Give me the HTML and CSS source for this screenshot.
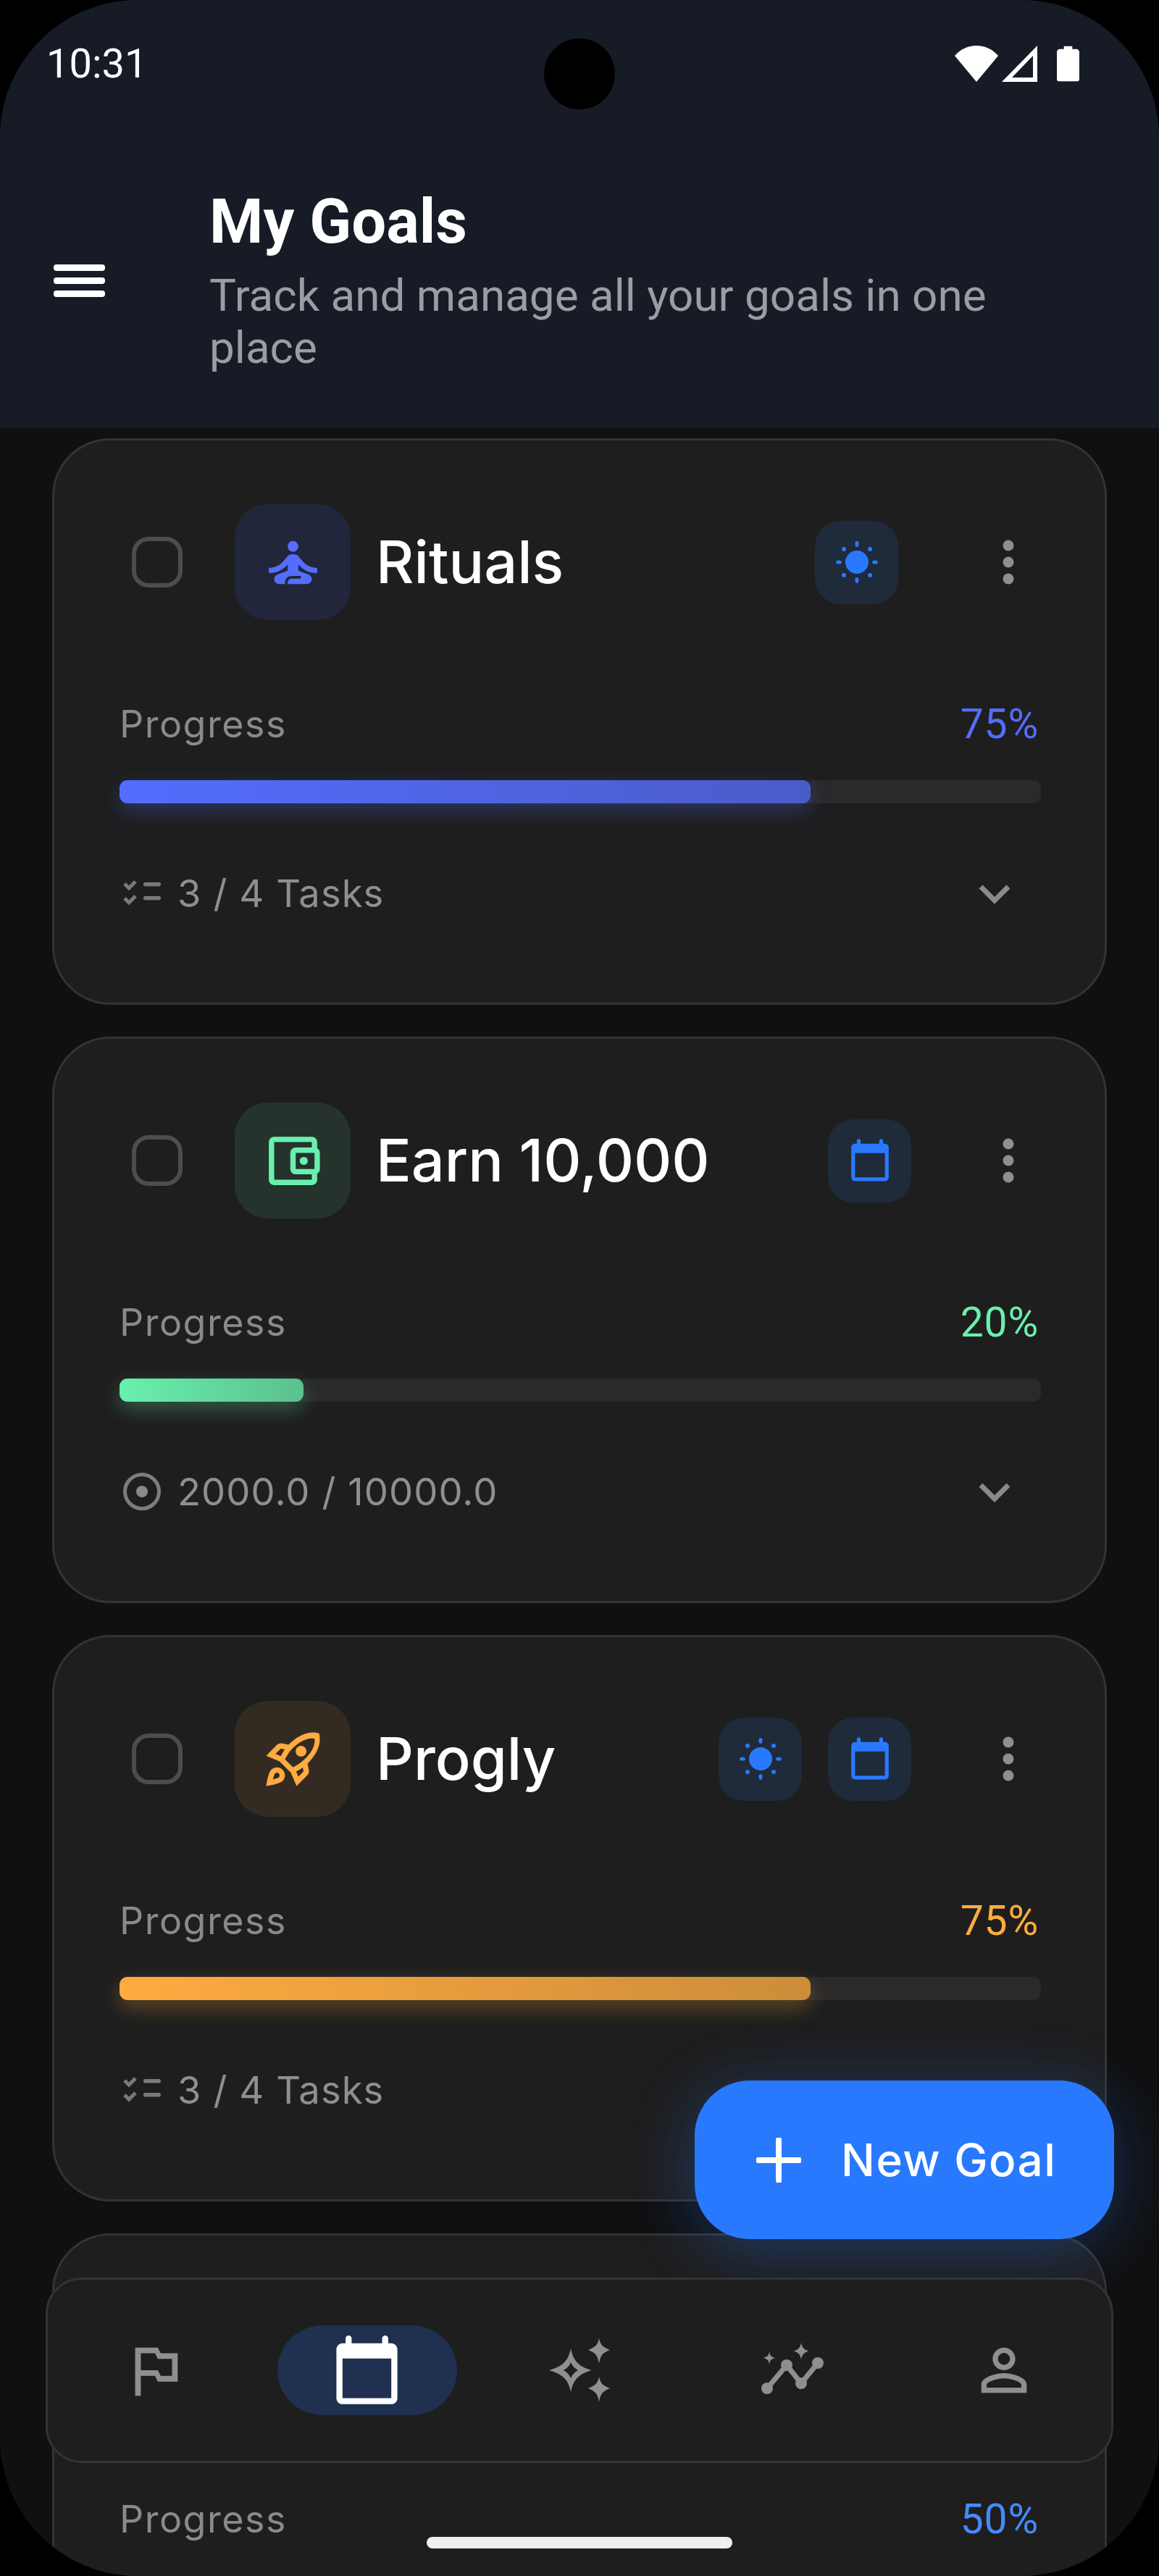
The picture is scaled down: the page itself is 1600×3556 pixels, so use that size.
FILE: index.html
```html
<!DOCTYPE html>
<html lang="en">
<head>
<meta charset="utf-8">
<title>My Goals</title>
<link rel="stylesheet" href="styles.css">
</head>
<body>
<svg class="defs" width="0" height="0" aria-hidden="true">
  <symbol id="sun" viewBox="-32 -32 64 64">
    <circle r="16"/>
    <ellipse cy="-25" rx="2.6" ry="4"/><ellipse cy="25" rx="2.6" ry="4"/>
    <ellipse cx="-25" rx="4" ry="2.6"/><ellipse cx="25" rx="4" ry="2.6"/>
    <circle cx="-18" cy="-18" r="3"/><circle cx="18" cy="-18" r="3"/>
    <circle cx="-18" cy="18" r="3"/><circle cx="18" cy="18" r="3"/>
  </symbol>
  <symbol id="cal" viewBox="0 0 24 24">
    <path d="M20 3h-1V1.5a.75.75 0 0 0-2 0V3H7V1.5a.75.75 0 0 0-2 0V3H4c-1.1 0-2 .9-2 2v16c0 1.1.9 2 2 2h16c1.1 0 2-.9 2-2V5c0-1.1-.9-2-2-2zm0 18H4V8h16v13z"/>
  </symbol>
  <symbol id="kebab" viewBox="0 0 20 64">
    <circle cx="10" cy="9" r="7.5"/><circle cx="10" cy="32" r="7.5"/><circle cx="10" cy="55" r="7.5"/>
  </symbol>
  <symbol id="chev" viewBox="0 0 64 64">
    <path d="M13 21l19 19 19-19" fill="none" stroke="currentColor" stroke-width="7"/>
  </symbol>
  <symbol id="tasks" viewBox="0 0 52 40">
    <path d="M2 7l6 6 9-9M2 27l6 6 9-9" fill="none" stroke="#7a7a7a" stroke-width="5"/>
    <rect x="28" y="5" width="24" height="5.5" rx="2.7" fill="#7a7a7a"/>
    <rect x="28" y="24" width="24" height="5.5" rx="2.7" fill="#7a7a7a"/>
  </symbol>
  <symbol id="target" viewBox="0 0 56 56">
    <circle cx="28" cy="28" r="23.5" fill="none" stroke="#7d7d7d" stroke-width="5"/>
    <circle cx="28" cy="28" r="8" fill="#8a8a8a"/>
  </symbol>
</svg>

<div class="phone">
  <header class="topbar">
    <div class="status">
      <span class="time">10:31</span>
      <div class="status-icons">
        <svg class="ic-wifi" viewBox="0 0 60 50"><path d="M0 14C8 5 18 0 30 0s22 5 30 14L30 50z"/></svg>
        <svg class="ic-signal" viewBox="0 0 50 50"><path fill-rule="evenodd" d="M49 0v50H0zM43 14L14 44h29z"/></svg>
        <svg class="ic-batt" viewBox="0 0 32 50"><path d="M10 0h12v4h6c2 0 4 2 4 4v39c0 2-1 3-3 3H3c-2 0-3-1-3-3V8c0-2 2-4 4-4h6z"/></svg>
      </div>
    </div>
    <div class="camera"></div>
    <div class="appbar">
      <div class="menu"><i></i><i></i><i></i></div>
      <div class="appbar-text">
        <h1>My Goals</h1>
        <p>Track and manage all your goals in one place</p>
      </div>
    </div>
  </header>

  <main class="list">
    <article class="card">
      <div class="row-head">
        <span class="check"></span>
        <span class="badge badge-indigo">
          <svg class="badge-ic" viewBox="0 0 24 24"><circle cx="12" cy="6" r="2"/><path d="M21 16v-2c-2.24 0-4.16-.96-5.6-2.68l-1.34-1.6c-.38-.46-.94-.72-1.53-.72h-1.05c-.59 0-1.15.26-1.53.72l-1.34 1.6C7.16 13.04 5.24 14 3 14v2c2.77 0 5.19-1.17 7-3.25V15l-3.88 1.55c-.67.27-1.12.93-1.12 1.64C5 19.19 5.81 20 6.81 20H9v-.5c0-1.38 1.12-2.5 2.5-2.5h3c.28 0 .5.22.5.5s-.22.5-.5.5h-3c-.83 0-1.5.67-1.5 1.5v.5h7.19c1 0 1.81-.81 1.81-1.81 0-.71-.45-1.37-1.12-1.64L14 15v-2.25c1.81 2.08 4.23 3.25 7 3.25z"/></svg>
        </span>
        <h2>Rituals</h2>
        <div class="chips chips-shift">
          <span class="chip"><svg class="chip-sun"><use href="#sun"/></svg></span>
        </div>
        <span class="kebab"><svg><use href="#kebab"/></svg></span>
      </div>
      <div class="row-label"><span>Progress</span><b class="pct-indigo">75%</b></div>
      <div class="track"><div class="fill fill-indigo" style="width:75%"></div></div>
      <div class="row-foot">
        <svg class="foot-tasks"><use href="#tasks"/></svg>
        <span class="foot-text">3 / 4 Tasks</span>
        <svg class="chev"><use href="#chev"/></svg>
      </div>
    </article>

    <article class="card">
      <div class="row-head">
        <span class="check"></span>
        <span class="badge badge-green">
          <svg class="badge-ic" viewBox="0 0 24 24"><path d="M21 7.28V5c0-1.1-.9-2-2-2H5c-1.11 0-2 .9-2 2v14c0 1.1.89 2 2 2h14c1.1 0 2-.9 2-2v-2.28c.59-.35 1-.98 1-1.72V9c0-.74-.41-1.37-1-1.72zM20 9v6h-7V9h7zM5 19V5h14v2h-6c-1.1 0-2 .9-2 2v6c0 1.1.9 2 2 2h6v2H5z"/><circle cx="16" cy="12" r="1.5"/></svg>
        </span>
        <h2>Earn 10,000</h2>
        <div class="chips">
          <span class="chip"><svg class="chip-cal"><use href="#cal"/></svg></span>
        </div>
        <span class="kebab"><svg><use href="#kebab"/></svg></span>
      </div>
      <div class="row-label"><span>Progress</span><b class="pct-green">20%</b></div>
      <div class="track"><div class="fill fill-green" style="width:20%"></div></div>
      <div class="row-foot">
        <svg class="foot-target"><use href="#target"/></svg>
        <span class="foot-text">2000.0 / 10000.0</span>
        <svg class="chev"><use href="#chev"/></svg>
      </div>
    </article>

    <article class="card">
      <div class="row-head">
        <span class="check"></span>
        <span class="badge badge-orange">
          <svg class="badge-ic" viewBox="0 0 24 24"><path d="M6 15c-.83 0-1.58.34-2.12.88C2.68 17.08 2 22 2 22s4.92-.68 6.12-1.88c.54-.54.88-1.29.88-2.12 0-1.66-1.34-3-3-3zm.71 3.71c-.28.28-2.17.76-2.17.76s.47-1.88.76-2.17c.17-.19.42-.3.7-.3.55 0 1 .45 1 1 0 .28-.11.53-.29.71zm10.71-5.06c6.36-6.36 4.24-11.31 4.24-11.31S16.71.22 10.35 6.58l-2.49-.5c-.65-.13-1.33.08-1.81.55L2 10.69l5 2.14L11.17 17l2.14 5 4.05-4.05c.47-.47.68-1.15.55-1.81l-.49-2.49zM7.41 10.83l-1.91-.82 1.97-1.97 1.44.29c-.57.83-1.08 1.7-1.5 2.5zm6.58 7.67l-.82-1.91c.8-.42 1.67-.93 2.49-1.5l.29 1.44-1.96 1.97zM16 12.24c-1.32 1.32-3.38 2.4-4.04 2.73l-2.93-2.93c.32-.65 1.4-2.71 2.73-4.04 4.68-4.68 8.23-3.69 8.23-3.69s.99 3.55-3.99 7.93zM15 11c1.1 0 2-.9 2-2s-.9-2-2-2-2 .9-2 2 .9 2 2 2z"/></svg>
        </span>
        <h2>Progly</h2>
        <div class="chips">
          <span class="chip"><svg class="chip-sun"><use href="#sun"/></svg></span>
          <span class="chip"><svg class="chip-cal"><use href="#cal"/></svg></span>
        </div>
        <span class="kebab"><svg><use href="#kebab"/></svg></span>
      </div>
      <div class="row-label"><span>Progress</span><b class="pct-orange">75%</b></div>
      <div class="track"><div class="fill fill-orange" style="width:75%"></div></div>
      <div class="row-foot">
        <svg class="foot-tasks"><use href="#tasks"/></svg>
        <span class="foot-text">3 / 4 Tasks</span>
        <svg class="chev"><use href="#chev"/></svg>
      </div>
    </article>

    <article class="card">
      <div class="row-head"></div>
      <div class="row-label"><span>Progress</span><b class="pct-blue">50%</b></div>
    </article>
  </main>

  <button class="fab">
    <svg class="fab-plus" viewBox="0 0 62 62"><path d="M31 3v56M3 31h56" fill="none" stroke="#fff" stroke-width="8" stroke-linecap="round"/></svg>
    <span>New Goal</span>
  </button>

  <nav class="nav">
    <div class="nav-item">
      <svg class="nav-ic" viewBox="0 0 24 24"><path d="M14 6l-1-2H5v17h2v-7h5l1 2h7V6h-6zm4 8h-4l-1-2H7V6h5l1 2h5v6z"/></svg>
    </div>
    <div class="nav-item nav-active">
      <span class="pill"><svg class="nav-cal"><use href="#cal"/></svg></span>
    </div>
    <div class="nav-item">
      <svg class="nav-ic" viewBox="0 0 94 94"><path fill-rule="evenodd" d="M35 17c3 14 8 24 28.500 30C43 53 38 63 35 77 32 63 27 53 5 47c22-6 27-16 30-30zm0 19c-2 5-5 8-10 11 5 3 8 6 10 11 2-5 5-8 10-11-5-3-8-6-10-11z"/><path d="M74 3c2 9 5 12 15 16-10 4-13 7-15 19-2-12-5-15-15-19 10-4 13-7 15-16zM74 56c2 9 5 12 15 16-10 4-13 7-15 19-2-12-5-15-15-19 10-4 13-7 15-16z"/></svg>
    </div>
    <div class="nav-item">
      <svg class="nav-ic" viewBox="-3 0 94 94"><path d="M10 72l27-32 20 25 23-28" fill="none" stroke="currentColor" stroke-width="7" stroke-linejoin="round"/><circle cx="10" cy="72" r="8"/><circle cx="37" cy="40" r="8"/><circle cx="57" cy="65" r="8"/><circle cx="80" cy="37" r="8"/><path d="M57 9c1.500 7 3.500 9 10 11.500C60.500 23 58.500 25 57 32c-1.500-7-3.500-9-10-11.500C53.500 18 55.500 16 57 9zM13 21c1 6 2 7 8 9-6 2-7 3-8 9-1-6-2-7-8-9 6-2 7-3 8-9z"/></svg>
    </div>
    <div class="nav-item">
      <svg class="nav-ic" viewBox="0 0 24 24"><path d="M12 5.900c1.160 0 2.100.94 2.100 2.100s-.94 2.100-2.100 2.100S9.900 9.160 9.900 8s.94-2.100 2.100-2.100m0 9c2.970 0 6.100 1.460 6.100 2.100v1.100H5.900V17c0-.64 3.130-2.100 6.100-2.100M12 4C9.790 4 8 5.790 8 8s1.790 4 4 4 4-1.790 4-4-1.790-4-4-4zm0 9c-2.670 0-8 1.340-8 4v3h16v-3c0-2.660-5.330-4-8-4z"/></svg>
    </div>
  </nav>

  <div class="home-bar"></div>
</div>
</body>
</html>
```

FILE: styles.css
```css
* { box-sizing: border-box; }
html, body { margin: 0; padding: 0; background: #000; }
.defs { position: absolute; }

.phone {
  position: relative;
  width: 1600px;
  height: 3556px;
  overflow: hidden;
  border-radius: 190px;
  background: #101010;
  font-family: "Inter", "Liberation Sans", sans-serif;
}

/* Header */
.topbar {
  position: relative;
  height: 591px;
  background: #161b26;
  font-family: "Roboto", "Liberation Sans", sans-serif;
}
.status {
  display: flex;
  justify-content: space-between;
  align-items: flex-start;
  height: 140px;
  padding: 56px 110px 0 64px;
}
.time { font-size: 56px; line-height: 64px; color: #fff; }
.status-icons { display: flex; gap: 5px; padding-top: 7px; }
.status-icons svg { fill: #fff; display: block; height: 50px; }
.ic-wifi { width: 60px; }
.ic-signal { width: 50px; }
.ic-batt { width: 31px; margin-left: 21px; }
.camera {
  position: absolute;
  left: 751px;
  top: 53px;
  width: 98px;
  height: 98px;
  border-radius: 50%;
  background: #000;
}
.appbar {
  display: flex;
  align-items: flex-start;
  padding: 122px 110px 0 74px;
}
.menu {
  display: flex;
  flex-direction: column;
  gap: 9px;
  width: 71px;
  margin: 103px 144px 0 0;
  flex: none;
}
.menu i { display: block; height: 9px; border-radius: 4px; background: #fff; }
.appbar-text { flex: 1; min-width: 0; }
.appbar-text h1 {
  margin: 0 0 22px;
  font-size: 85px;
  line-height: 88px;
  font-weight: 700;
  color: #fff;
}
.appbar-text p {
  margin: 0;
  font-size: 62px;
  line-height: 72px;
  color: #9b9da3;
}

/* List */
.list {
  display: flex;
  flex-direction: column;
  gap: 44px;
  padding: 14px 72px 0;
}
.card {
  flex: none;
  height: 782px;
  padding: 88px 88px 0 90px;
  background: #1e1e1e;
  border: 3px solid #333;
  border-radius: 80px;
}
.row-head { display: flex; align-items: center; height: 160px; }
.check {
  flex: none;
  width: 70px;
  height: 70px;
  margin: 0 72px 0 17px;
  border: 6px solid #4d4d4d;
  border-radius: 23px;
}
.badge {
  flex: none;
  display: flex;
  align-items: center;
  justify-content: center;
  width: 160px;
  height: 160px;
  border-radius: 46px;
}
.badge-ic { width: 89px; height: 89px; display: block; }
.badge-indigo { background: #22263a; fill: #536dfe; }
.badge-green { background: #26332d; fill: #69f0ae; }
.badge-orange { background: #332b22; fill: #ffab40; }
.row-head h2 {
  flex: 1;
  min-width: 0;
  margin: 0 0 0 35px;
  font-size: 81px;
  line-height: 96px;
  font-weight: 500;
  color: #fff;
}
.chips { display: flex; gap: 36px; margin-right: 89px; flex: none; }
.chips-shift { margin-right: 107px; }
.chip {
  display: flex;
  align-items: center;
  justify-content: center;
  width: 115px;
  height: 115px;
  border-radius: 35px;
  background: #1f2a3a;
  fill: #2979ff;
}
.chip-sun { width: 64px; height: 64px; display: block; }
.chip-cal { width: 62px; height: 62px; display: block; }
.kebab { flex: none; width: 90px; display: flex; justify-content: center; fill: #8f8f8f; }
.kebab svg { width: 20px; height: 64px; display: block; }

.row-label {
  display: flex;
  justify-content: space-between;
  align-items: center;
  height: 72px;
  margin-top: 107px;
  font-size: 52px;
  color: #8a8a8a;
  letter-spacing: 1.500px;
}
.row-label b {
  font-family: "Roboto", "Liberation Sans", sans-serif;
  font-size: 57px;
  font-weight: 400;
  letter-spacing: .8px;
  padding-right: 3px;
}
.pct-indigo { color: #536dfe; }
.pct-green { color: #69f0ae; }
.pct-orange { color: #ffab40; }
.pct-blue { color: #448aff; }

.track { height: 32px; margin-top: 42px; border-radius: 11px; background: #2a2a2a; }
.fill { height: 100%; border-radius: 11px; }
.fill-indigo { background: linear-gradient(90deg, #536dfe, #4a5cc8); box-shadow: 0 10px 28px rgba(83,109,254,.3); }
.fill-green { background: linear-gradient(90deg, #69f0ae, #5cc08e); box-shadow: 0 10px 28px rgba(105,240,174,.3); }
.fill-orange { background: linear-gradient(90deg, #ffab40, #cc8d3a); box-shadow: 0 10px 28px rgba(255,171,64,.3); }

.row-foot {
  display: flex;
  align-items: center;
  height: 72px;
  margin-top: 88px;
  padding-left: 5px;
  color: #8f8f8f;
}
.foot-tasks { width: 52px; height: 40px; flex: none; }
.foot-target { width: 56px; height: 56px; flex: none; margin-left: -2px; margin-right: -2px; }
.foot-text {
  flex: 1;
  margin-left: 23px;
  font-size: 52.500px;
  letter-spacing: 1.100px;
}
.chev { width: 64px; height: 64px; flex: none; margin-right: 32px; color: #8a8a8a; transform: translateY(2px); }

/* FAB */
.fab {
  position: absolute;
  left: 959px;
  top: 2872px;
  z-index: 2;
  display: flex;
  align-items: center;
  width: 579px;
  height: 219px;
  padding: 0 0 0 85px;
  border: 0;
  border-radius: 76px;
  background: #2979ff;
  color: #fff;
  font-family: "Inter", "Liberation Sans", sans-serif;
  font-size: 62px;
  font-weight: 500;
  letter-spacing: 1.500px;
  box-shadow: 0 14px 90px rgba(41,121,255,.32);
}
.fab-plus { width: 62px; height: 62px; flex: none; margin-right: 55px; }

/* Bottom navigation */
.nav {
  position: absolute;
  left: 63px;
  top: 3144px;
  z-index: 3;
  display: grid;
  grid-template-columns: repeat(5, 1fr);
  width: 1474px;
  height: 256px;
  padding: 0 2px;
  background: #1e1e1e;
  border: 3px solid #333;
  border-radius: 50px;
}
.nav-item {
  display: flex;
  align-items: center;
  justify-content: center;
  fill: #8f8f8f;
  color: #8f8f8f;
}
.nav-ic { width: 94px; height: 94px; display: block; }
.pill {
  display: flex;
  align-items: center;
  justify-content: center;
  width: 248px;
  height: 124px;
  border-radius: 62px;
  background: #1f3050;
}
.nav-cal { width: 101px; height: 101px; display: block; fill: #fff; transform: translateX(-1px); }

.home-bar {
  position: absolute;
  left: 589px;
  top: 3502px;
  z-index: 4;
  width: 422px;
  height: 16px;
  border-radius: 8px;
  background: #f0f0f0;
}
```
